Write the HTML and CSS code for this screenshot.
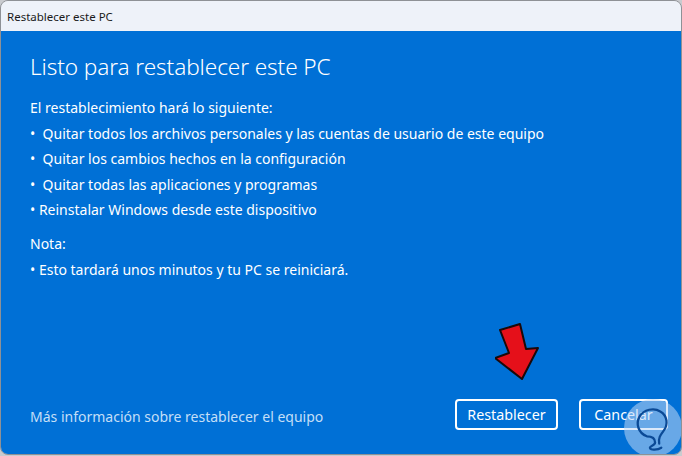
FILE: index.html
```html
<!DOCTYPE html>
<html lang="es">
<head>
<meta charset="utf-8">
<title>Restablecer este PC</title>
<link rel="stylesheet" href="styles.css">
</head>
<body>
<div class="window">
  <div class="titlebar">Restablecer este PC</div>
  <div class="content">
    <h1 class="heading">Listo para restablecer este PC</h1>
    <p class="line">El restablecimiento hará lo siguiente:</p>
    <p class="line">•&nbsp; Quitar todos los archivos personales y las cuentas de usuario de este equipo</p>
    <p class="line">•&nbsp; Quitar los cambios hechos en la configuración</p>
    <p class="line">•&nbsp; Quitar todas las aplicaciones y programas</p>
    <p class="line">• Reinstalar Windows desde este dispositivo</p>
    <p class="line note">Nota:</p>
    <p class="line">• Esto tardará unos minutos y tu PC se reiniciará.</p>
    <div class="spacer"></div>
    <div class="footer">
      <a class="link" href="#">Más información sobre restablecer el equipo</a>
      <div class="buttons">
        <button class="btn btn-reset">Restablecer</button>
        <button class="btn btn-cancel">Cancelar</button>
      </div>
    </div>
    <svg class="arrow" width="50" height="64" viewBox="0 0 50 64">
      <polygon points="5,9 25,3 31,28 43,27 27,58 0,37 14,32" fill="#e5101a" stroke="#1a0a0a" stroke-width="2" stroke-linejoin="round"/>
    </svg>
    <div class="badge">
      <svg width="58" height="58" viewBox="0 0 56 56">
        <path d="M22 36 C14 33 11 24 15 17 C19 10 29 8 35 12 C42 16 43 25 38 31 C35 35 33 38 34 43 M22 36 C27 36 30 38 30 42 C30 45 25 45 25 47 C25 50 33 49 36 47" fill="none" stroke="#0b4a96" stroke-width="2.2" stroke-linecap="round" stroke-linejoin="round"/>
      </svg>
    </div>
  </div>
</div>
</body>
</html>
```
FILE: styles.css
```css
html, body {
  margin: 0;
  padding: 0;
  background: #c9cbcf;
}
body {
  width: 682px;
  height: 456px;
  overflow: hidden;
  font-family: "Noto Sans", "Open Sans", sans-serif;
}
.window {
  width: 682px;
  height: 455px;
  box-sizing: border-box;
  border: 1px solid #8e9196;
  border-radius: 8px;
  overflow: hidden;
  display: flex;
  flex-direction: column;
}
.titlebar {
  height: 30px;
  background: #eef2f9;
  color: #1a1a1a;
  font-size: 11.5px;
  display: flex;
  align-items: center;
  padding-left: 6px;
  flex: 0 0 auto;
}
.content {
  position: relative;
  flex: 1;
  background: #0070d6;
  color: #ffffff;
  padding: 0 29px 24px 29px;
  display: flex;
  flex-direction: column;
}
.heading {
  font-weight: 300;
  font-size: 22.6px;
  line-height: 32px;
  margin: 20px 0 12px 0;
  letter-spacing: -0.1px;
}
.line {
  margin: 0;
  font-size: 14px;
  line-height: 25.5px;
}
.note {
  margin-top: 8.5px;
}
.spacer {
  flex: 1;
}
.footer {
  display: flex;
  align-items: center;
  justify-content: space-between;
}
.link {
  color: #c4dff7;
  font-size: 14px;
  text-decoration: none;
  margin-top: 4px;
}
.buttons {
  display: flex;
  gap: 21px;
  margin-right: -16px;
}
.btn {
  height: 31px;
  border: 2px solid #ffffff;
  border-radius: 4px;
  background: transparent;
  color: #ffffff;
  font-family: "Noto Sans", "Open Sans", sans-serif;
  font-size: 14.3px;
  padding: 0;
}
.btn-reset {
  width: 103px;
}
.btn-cancel {
  width: 89px;
}
.arrow {
  position: absolute;
  left: 494px;
  top: 290px;
}
.badge {
  position: absolute;
  left: 623px;
  top: 368px;
  width: 58px;
  height: 58px;
  border-radius: 50%;
  background: rgba(190, 215, 245, 0.55);
}
.badge svg {
  display: block;
}
```
